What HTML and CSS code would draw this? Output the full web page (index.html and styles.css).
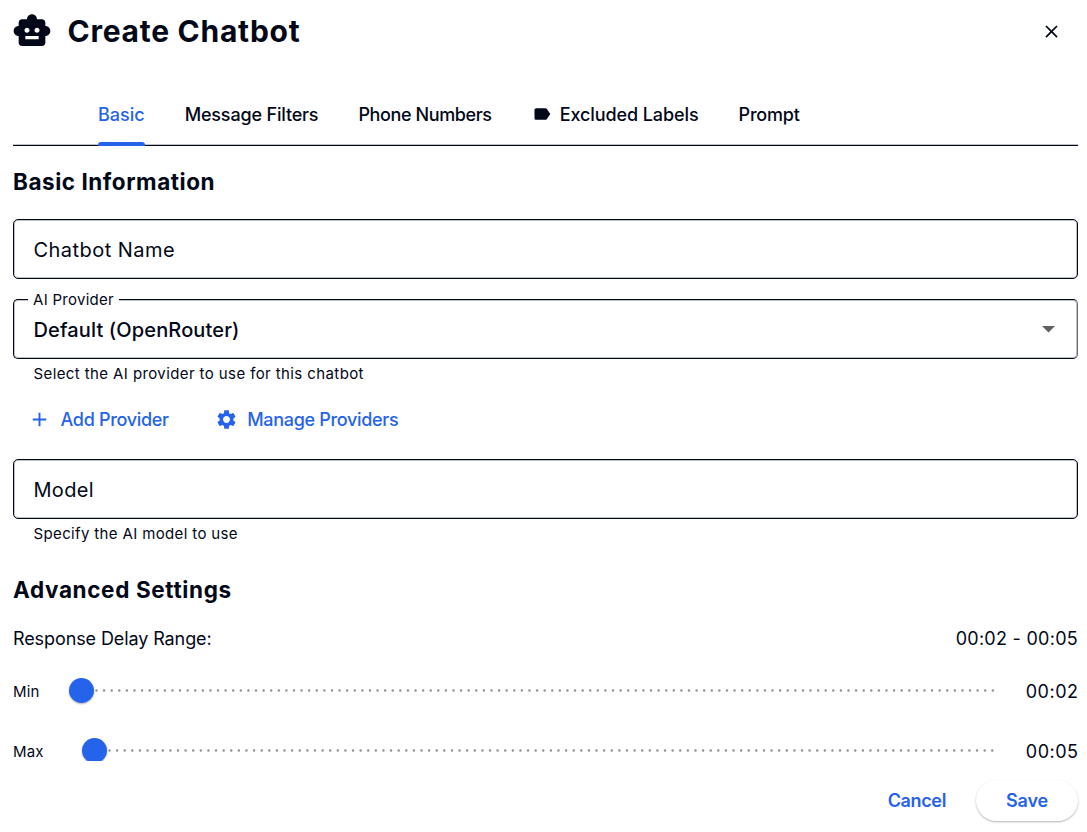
FILE: index.html
```
<!DOCTYPE html>
<html lang="en">
<head>
    <meta charset="UTF-8">
    <meta name="viewport" content="width=device-width, initial-scale=1.0">
    <title>Create Chatbot</title>
    <link rel="stylesheet" href="styles.css">
</head>
<body>
    <div class="dialog">
        <header class="dialog-header">
            <svg class="robot-icon" viewBox="0 0 24 24"><path d="M20 9V7c0-1.100-.9-2-2-2h-3c0-1.660-1.340-3-3-3S9 3.340 9 5H6c-1.100 0-2 .9-2 2v2c-1.660 0-3 1.340-3 3s1.340 3 3 3v4c0 1.100.9 2 2 2h12c1.100 0 2-.9 2-2v-4c1.660 0 3-1.340 3-3s-1.340-3-3-3zM7.500 11.500c0-.83.67-1.500 1.500-1.500s1.500.67 1.500 1.500S9.830 13 9 13s-1.500-.67-1.500-1.500zM16 17H8v-2h8v2zm-1-4c-.83 0-1.500-.67-1.500-1.500S14.170 10 15 10s1.500.67 1.500 1.500S15.830 13 15 13z"/></svg>
            <h1>Create Chatbot</h1>
            <button class="close-button" type="button" aria-label="Close">
                <svg viewBox="0 0 24 24"><path d="M19 6.410L17.590 5 12 10.590 6.410 5 5 6.410 10.590 12 5 17.590 6.410 19 12 13.410 17.590 19 19 17.590 13.410 12z"/></svg>
            </button>
        </header>

        <nav class="tabs">
            <a class="tab tab-basic active">Basic</a>
            <a class="tab tab-filters">Message Filters</a>
            <a class="tab tab-phones">Phone Numbers</a>
            <a class="tab tab-labels">
                <svg viewBox="0 0 24 24"><path d="M17.630 5.840C17.270 5.330 16.670 5 16 5L5 5.010C3.900 5.010 3 5.900 3 7v10c0 1.100.9 1.990 2 1.990L16 19c.67 0 1.270-.33 1.630-.84L22 12l-4.370-6.160z"/></svg>
                <span>Excluded Labels</span>
            </a>
            <a class="tab tab-prompt">Prompt</a>
        </nav>

        <main class="dialog-content">
            <h2>Basic Information</h2>
            <div class="field">
                <span class="placeholder name-text">Chatbot Name</span>
            </div>
            <div class="field select-field">
                <span class="field-label">AI Provider</span>
                <span class="select-value">Default (OpenRouter)</span>
                <svg class="arrow" viewBox="0 0 10 5"><path d="M0 0h10L5 5z"/></svg>
            </div>
            <p class="hint provider-hint">Select the AI provider to use for this chatbot</p>
            <div class="provider-actions">
                <button class="text-button add-button" type="button">
                    <svg viewBox="0 0 24 24"><path d="M19 13h-6v6h-2v-6H5v-2h6V5h2v6h6v2z"/></svg>
                    <span>Add Provider</span>
                </button>
                <button class="text-button manage-button" type="button">
                    <svg viewBox="0 0 24 24"><path d="M19.140 12.940c.04-.3.06-.61.06-.94 0-.32-.02-.64-.07-.94l2.030-1.580c.18-.14.23-.41.12-.61l-1.920-3.320c-.12-.22-.37-.29-.59-.22l-2.390.96c-.5-.38-1.030-.7-1.620-.94l-.36-2.540c-.04-.24-.24-.41-.48-.41h-3.840c-.24 0-.43.17-.47.41l-.36 2.540c-.59.24-1.130.57-1.620.94l-2.390-.96c-.22-.08-.47 0-.59.22L2.740 8.870c-.12.21-.08.47.12.61l2.030 1.580c-.05.3-.09.63-.09.94s.02.64.07.94l-2.030 1.580c-.18.14-.23.41-.12.61l1.920 3.320c.12.22.37.29.59.22l2.390-.96c.5.38 1.030.7 1.620.94l.36 2.540c.05.24.24.41.48.41h3.840c.24 0 .44-.17.47-.41l.36-2.540c.59-.24 1.130-.56 1.620-.94l2.390.96c.22.08.47 0 .59-.22l1.920-3.320c.12-.22.07-.47-.12-.61l-2.010-1.580zM12 15.600c-1.980 0-3.600-1.620-3.600-3.600s1.620-3.600 3.600-3.600 3.600 1.620 3.600 3.600-1.620 3.600-3.600 3.600z"/></svg>
                    <span>Manage Providers</span>
                </button>
            </div>
            <div class="field">
                <span class="placeholder model-text">Model</span>
            </div>
            <p class="hint model-hint">Specify the AI model to use</p>

            <h2 class="advanced-title">Advanced Settings</h2>
            <div class="range-header">
                <span class="range-title">Response Delay Range:</span>
                <span class="range-value">00:02 - 00:05</span>
            </div>
            <div class="slider-row">
                <span class="slider-label">Min</span>
                <div class="slider min-slider">
                    <span class="thumb"></span>
                    <svg class="ticks" width="902" height="3"><path d="M2.500 1.500h898"/></svg>
                </div>
                <span class="time">00:02</span>
            </div>
            <div class="slider-row">
                <span class="slider-label">Max</span>
                <div class="slider max-slider">
                    <span class="thumb"></span>
                    <svg class="ticks" width="889" height="3"><path d="M2.500 1.500h886"/></svg>
                </div>
                <span class="time">00:05</span>
            </div>
        </main>

        <footer class="dialog-actions">
            <button class="cancel-button" type="button">Cancel</button>
            <button class="save-button" type="button">Save</button>
        </footer>
    </div>
</body>
</html>
```
FILE: styles.css
```
* {
    box-sizing: border-box;
}

body {
    margin: 0;
    background: #fff;
    color: #020817;
    font-family: Inter, "Liberation Sans", sans-serif;
    overflow: hidden;
}

h1, h2, p {
    margin: 0;
}

button {
    padding: 0;
    border: none;
    background: none;
    font-family: inherit;
    color: #2563eb;
    cursor: pointer;
}

svg {
    display: block;
    flex: none;
    fill: currentColor;
}

.dialog {
    display: flex;
    flex-direction: column;
    width: 1087px;
    height: 832px;
}

.dialog-header {
    display: flex;
    align-items: center;
    height: 62px;
    padding: 0 25px 0 12px;
}

.robot-icon {
    width: 40px;
    height: 40px;
    margin-right: 15.5px;
}

h1 {
    font-size: 30px;
    font-weight: 700;
    line-height: 40px;
    letter-spacing: 0.74px;
    white-space: nowrap;
}

.close-button {
    margin-left: auto;
    color: #020817;
}

.close-button svg {
    width: 21px;
    height: 21px;
}

.tabs {
    display: flex;
    height: 62px;
    margin: 22px 9px 0 12.5px;
    padding-left: 85.5px;
    gap: 40px;
    border-bottom: 1px solid #020817;
    box-shadow: inset 0 -1px rgba(2, 8, 23, 0.25);
}

.tab {
    position: relative;
    display: flex;
    align-items: center;
    height: 62px;
    padding-bottom: 2px;
    font-size: 18px;
    font-weight: 500;
    line-height: 25px;
    white-space: nowrap;
}

.tab.active {
    color: #2563eb;
}

.tab.active::after {
    content: '';
    position: absolute;
    left: 0;
    right: 0;
    bottom: 0;
    height: 4px;
    border-radius: 3px 3px 0 0;
    background: #2563eb;
}

.tab svg {
    width: 20px;
    height: 20px;
    margin-right: 8px;
}

.tab-filters {
    letter-spacing: -0.17px;
}

.tab-phones {
    letter-spacing: -0.38px;
}

.tab-labels {
    letter-spacing: -0.09px;
}

.tab-prompt {
    letter-spacing: -0.2px;
}

.dialog-content {
    height: 615px;
    padding: 21px 9px 0 13px;
    overflow: hidden;
}

h2 {
    height: 52px;
    font-size: 22.5px;
    font-weight: 700;
    line-height: 30px;
    letter-spacing: 0.54px;
}

.advanced-title {
    margin-top: 26px;
    height: 49px;
    letter-spacing: 0.64px;
}

.field {
    position: relative;
    display: flex;
    align-items: center;
    height: 60px;
    padding: 2px 20px 0 19.5px;
    border: 1px solid #020817;
    border-radius: 5px;
    box-shadow: inset 0 0 0 1px rgba(2, 8, 23, 0.25);
    font-size: 20px;
}

.name-text {
    letter-spacing: 0.45px;
}

.model-text {
    letter-spacing: 0.3px;
}

.select-field {
    margin-top: 20px;
    border-right-color: rgba(2, 8, 23, 0.6);
}

.field-label {
    position: absolute;
    top: -11px;
    left: 14px;
    padding: 0 5px;
    background: #fff;
    font-size: 15px;
    line-height: 22px;
    letter-spacing: 0.28px;
}

.select-value {
    font-weight: 500;
    letter-spacing: 0.13px;
}

.arrow {
    width: 13px;
    height: 6.500px;
    margin-left: auto;
    margin-right: 2px;
    margin-bottom: 1px;
    color: #606060;
}

.hint {
    padding-left: 20.5px;
    font-size: 15px;
    line-height: 30px;
}

.provider-hint {
    letter-spacing: 0.4px;
}

.model-hint {
    letter-spacing: 0.36px;
}

.provider-actions {
    display: flex;
    height: 70px;
    padding: 5px 0 15px 15px;
    gap: 46px;
}

.text-button {
    display: flex;
    align-items: center;
    font-size: 18px;
    font-weight: 500;
    letter-spacing: -0.31px;
}

.text-button svg {
    width: 23px;
    height: 23px;
    margin-right: 9.5px;
}

.range-header {
    display: flex;
    justify-content: space-between;
    height: 37px;
    font-size: 18px;
    line-height: 30px;
}

.range-title {
    letter-spacing: -0.1px;
}

.range-value {
    letter-spacing: 0.27px;
}

.slider-row {
    display: flex;
    align-items: center;
    height: 60px;
}

.slider-label {
    width: 56px;
    padding-top: 1px;
    font-size: 15px;
    letter-spacing: 0.1px;
}

.slider {
    display: flex;
    flex: 1;
    align-items: center;
    margin-bottom: 0.5px;
}

.max-slider {
    padding-left: 12.5px;
}

.thumb {
    width: 25px;
    height: 25px;
    border-radius: 50%;
    background: #2563eb;
    box-shadow: 0 1px 2px rgba(0, 0, 0, 0.3);
}

.ticks {
    fill: none;
    stroke: #8e9198;
    stroke-width: 2.5px;
    stroke-linecap: round;
    stroke-dasharray: 0 7.596px;
}

.max-slider .ticks {
    stroke-dasharray: 0 7.61px;
}

.time {
    font-size: 18px;
    letter-spacing: 0.5px;
    margin-right: -0.5px;
}

.dialog-actions {
    display: flex;
    justify-content: flex-end;
    height: 71px;
    padding: 19px 9px 11px 0;
    gap: 30px;
}

.cancel-button, .save-button {
    height: 41px;
    font-size: 18px;
    font-weight: 600;
}

.cancel-button {
    letter-spacing: -0.35px;
}

.save-button {
    width: 102px;
    border-radius: 21px;
    background: #fff;
    box-shadow: 0 1px 2px rgba(0, 0, 0, 0.3);
    letter-spacing: -0.1px;
}
```
